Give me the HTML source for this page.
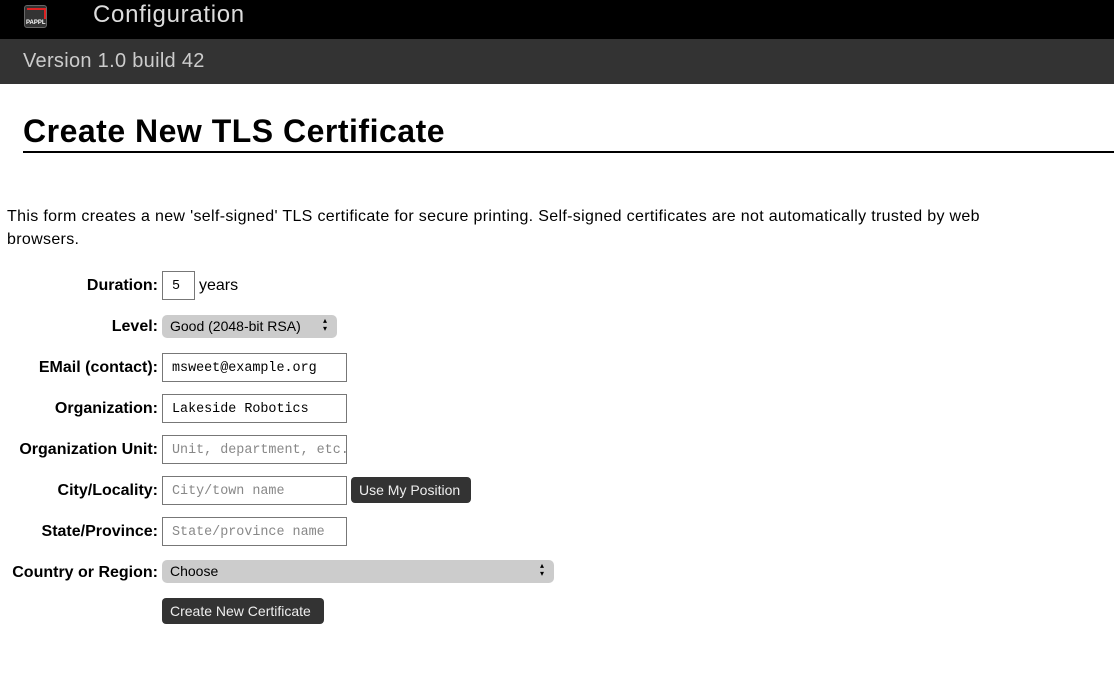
<!DOCTYPE html>
<html><head><style>
*{box-sizing:border-box}
body{margin:0;width:1114px;height:676px;background:#fff;font-family:"Liberation Sans",sans-serif;color:#000;position:relative;overflow:hidden}
.top{position:absolute;left:0;top:0;width:1114px;height:39px;background:#000}
.top .t{position:absolute;left:93px;top:1px;font-size:24px;color:#ddd;letter-spacing:0.7px}
.logo{position:absolute;left:24px;top:5px;width:23px;height:23px;background:#333;border-radius:3px;border:1px solid #666}
.logo:before{content:"";position:absolute;left:2px;top:2px;width:17px;height:9px;border-top:2px solid #d22;border-right:2px solid #d22}
.logo span{position:absolute;left:1px;bottom:1px;font-size:6px;color:#fff;font-weight:bold}
.ver{position:absolute;left:0;top:39px;width:1114px;height:45px;background:#333;}
.ver span{position:absolute;left:23px;top:11px;font-size:20px;color:#ccc;letter-spacing:0.3px}
h1{position:absolute;left:23px;top:113px;margin:0;font-size:32px;font-weight:bold;letter-spacing:0.5px}
.rule{position:absolute;left:23px;top:151px;width:1091px;height:2px;background:#000}
p{position:absolute;left:7px;top:205px;margin:0;width:1000px;font-size:16px;line-height:23px;letter-spacing:0.33px}
.lbl{position:absolute;right:956px;font-size:16px;font-weight:bold;text-align:right;white-space:nowrap}
.in{position:absolute;left:162px;width:185px;height:29px;border:1px solid #777;font-family:"Liberation Mono",monospace;font-size:13.4px;padding:7px 9px;color:#000;white-space:nowrap;overflow:hidden}
.ph{color:#888}
.sel{position:absolute;left:162px;height:23px;background:#ccc;border-radius:5px;font-size:14px;padding:3px 8px}
.sel:after{content:"\25B4\A\25BE";white-space:pre;position:absolute;right:10px;top:2px;font-size:8px;line-height:8px}
.btn{position:absolute;height:26px;background:#333;color:#eee;border-radius:4px;font-size:14px;padding:5px 8px;white-space:nowrap}
</style></head><body>
<div class="top"><div class="logo"><span>PAPPL</span></div><div class="t">Configuration</div></div>
<div class="ver"><span>Version 1.0 build 42</span></div>
<h1>Create New TLS Certificate</h1>
<div class="rule"></div>
<p>This form creates a new 'self-signed' TLS certificate for secure printing. Self-signed certificates are not automatically trusted by web browsers.</p>

<div class="lbl" style="top:277px">Duration:</div>
<div class="in" style="width:33px;top:271px">5</div>
<div style="position:absolute;left:199px;top:277px;font-size:16px">years</div>

<div class="lbl" style="top:318px">Level:</div>
<div class="sel" style="top:315px;width:175px">Good (2048-bit RSA)</div>

<div class="lbl" style="top:359px">EMail (contact):</div>
<div class="in" style="top:353px">msweet@example.org</div>

<div class="lbl" style="top:400px">Organization:</div>
<div class="in" style="top:394px">Lakeside Robotics</div>

<div class="lbl" style="top:441px">Organization Unit:</div>
<div class="in ph" style="top:435px">Unit, department, etc.</div>

<div class="lbl" style="top:482px">City/Locality:</div>
<div class="in ph" style="top:476px">City/town name</div>
<div class="btn" style="left:351px;top:477px;width:120px">Use My Position</div>

<div class="lbl" style="top:523px">State/Province:</div>
<div class="in ph" style="top:517px">State/province name</div>

<div class="lbl" style="top:564px">Country or Region:</div>
<div class="sel" style="top:560px;width:392px">Choose</div>

<div class="btn" style="left:162px;top:598px;width:162px">Create New Certificate</div>
</body></html>
